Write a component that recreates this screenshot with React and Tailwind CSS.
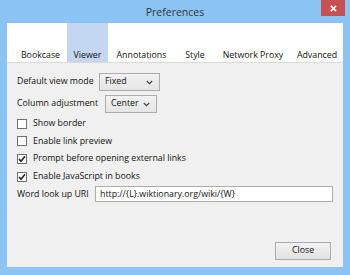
import React from "react";

const font = { fontFamily: '"Open Sans", "Noto Sans", sans-serif' };

// ─── Small pieces ─────────────────────────────────────────────────────────────
function Chevron() {
  return (
    <svg width="7" height="5" viewBox="0 0 7 5" className="shrink-0">
      <path d="M0.8 1 L3.5 3.7 L6.2 1" fill="none" stroke="#444" strokeWidth="1.2" />
    </svg>
  );
}

function Select({ value, width }) {
  return (
    <div
      className={`flex items-center justify-between h-[18px] ${width} border border-[#acacac] bg-gradient-to-b from-[#f2f2f2] to-[#e5e5e5] pl-[5px] pr-[6px] text-[8.8px] text-[#111] whitespace-nowrap`}
    >
      <span>{value}</span>
      <Chevron />
    </div>
  );
}

function Check({ label, checked }) {
  return (
    <div className="flex items-center h-[17.6px]">
      <div className="w-[10px] h-[10px] border border-[#707070] bg-white flex items-center justify-center">
        {checked && (
          <svg width="8" height="8" viewBox="0 0 8 8">
            <path d="M1 4 L3 6.2 L7 1.2" fill="none" stroke="#222" strokeWidth="1.6" />
          </svg>
        )}
      </div>
      <span className="ml-[6px] text-[8.8px] text-[#111] whitespace-nowrap">{label}</span>
    </div>
  );
}

const tabs = [
  { name: "Bookcase", w: "w-[53px]" },
  { name: "Viewer", w: "w-[41px]", active: true },
  { name: "Annotations", w: "w-[67px]" },
  { name: "Style", w: "w-[40px]" },
  { name: "Network Proxy", w: "w-[76px]" },
  { name: "Advanced", w: "w-[52px]" },
];

// ─── Main component ───────────────────────────────────────────────────────────
export default function App() {
  return (
    <div className="w-[350px] h-[275px] bg-[#8cc3f5] flex flex-col overflow-hidden" style={font}>
      {/* ── Title bar ── */}
      <div className="relative h-[23px] flex items-center justify-center shrink-0">
        <span className="text-[10.5px] text-[#333] leading-none mt-[2px]">Preferences</span>
        <div className="absolute right-[5px] top-0 w-[24px] h-[16px] bg-[#c75050] flex items-center justify-center">
          <svg width="7" height="7" viewBox="0 0 8 8">
            <path d="M1 1 L7 7 M7 1 L1 7" stroke="#fff" strokeWidth="1.8" />
          </svg>
        </div>
      </div>

      {/* ── Client area ── */}
      <div className="mx-[7px] h-[244px] flex flex-col bg-[#f0f0f0]">
        {/* Tabs */}
        <div className="h-[40px] bg-white border-b border-[#dadada] flex pl-[7px] shrink-0">
          {tabs.map((t) => (
            <div
              key={t.name}
              className={`${t.w} h-full flex items-end justify-center leading-[14px] text-[8.8px] text-[#111] whitespace-nowrap ${
                t.active ? "bg-[#c4d7f0]" : ""
              }`}
            >
              {t.name}
            </div>
          ))}
        </div>

        {/* Viewer page */}
        <div className="flex-1 flex flex-col pl-[10px] pr-[10px] pt-[10px]">
          <div className="flex items-center">
            <span className="w-[82px] text-[8.8px] text-[#111] whitespace-nowrap">Default view mode</span>
            <Select value="Fixed" width="w-[61px]" />
          </div>
          <div className="flex items-center mt-[4px]">
            <span className="w-[88px] text-[8.8px] text-[#111] whitespace-nowrap">Column adjustment</span>
            <Select value="Center" width="w-[52px]" />
          </div>
          <div className="flex flex-col mt-[2px]">
            <Check label="Show border" />
            <Check label="Enable link preview" />
            <Check label="Prompt before opening external links" checked />
            <Check label="Enable JavaScript in books" checked />
          </div>
          <div className="flex items-center mt-[1px]">
            <span className="w-[78px] text-[8.8px] text-[#111] whitespace-nowrap">Word look up URI</span>
            <div className="flex-1 h-[16px] border border-[#acacac] bg-white flex items-center pl-[4px] text-[8.8px] text-[#111] whitespace-nowrap">
              http://{"{"}L{"}"}.wiktionary.org/wiki/{"{"}W{"}"}
            </div>
          </div>
          <div className="flex-1" />
          <div className="flex justify-end pb-[7px] pr-[2px]">
            <div className="w-[56px] h-[18px] border border-[#acacac] bg-gradient-to-b from-[#f2f2f2] to-[#e2e2e2] flex items-center justify-center text-[8.8px] text-[#111]">
              Close
            </div>
          </div>
        </div>
      </div>
    </div>
  );
}
